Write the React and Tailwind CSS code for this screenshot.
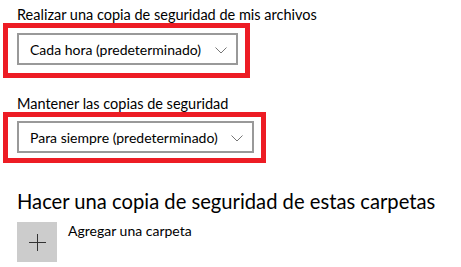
const Chevron = () => (
    <svg width="12" height="7" viewBox="0 0 12 7" className="shrink-0">
        <path d="M0.5 0.5 L6 6 L11.5 0.5" fill="none" stroke="#767676" strokeWidth="1" />
    </svg>
);

const Dropdown = ({ label, value, width, pad }) => {
    return (
        <div className="flex flex-col">
            <p className="pl-[17px] text-[14.5px] leading-[17px] text-black whitespace-nowrap">{label}</p>
            <div className={`ml-[3px] w-fit border-[5px] border-[#ed1c24] ${pad}`}>
                <div
                    className="flex items-center justify-between h-[32px] border-2 border-[#999999] bg-white pl-[11px] pr-[9px] pt-[2px]"
                    style={{ width: width }}
                >
                    <span className="text-[14px] leading-[20px] text-black whitespace-nowrap">{value}</span>
                    <Chevron />
                </div>
            </div>
        </div>
    );
};

export default function App() {
    return (
        <div
            className="w-[461px] h-[267px] bg-white overflow-hidden pt-[6px]"
            style={{ fontFamily: 'Lato, "Noto Sans", sans-serif' }}
        >
            <Dropdown
                label="Realizar una copia de seguridad de mis archivos"
                value="Cada hora (predeterminado)"
                width={221}
                pad="pl-[9px] pt-[5px] pr-[7px] pb-[8px]"
            />

            <div className="mt-[17px]">
                <Dropdown
                    label="Mantener las copias de seguridad"
                    value="Para siempre (predeterminado)"
                    width={237}
                    pad="pl-[9px] pt-[4px] pr-[7px] pb-[5px]"
                />
            </div>

            <h2 className="mt-[26px] pl-[17px] text-[20.2px] leading-[24px] text-black whitespace-nowrap">
                Hacer una copia de seguridad de estas carpetas
            </h2>

            <div className="mt-[9px] pl-[17px] flex items-start gap-[11px]">
                <button className="w-[40px] h-[40px] shrink-0 bg-[#cccccc] flex items-center justify-center">
                    <svg width="17" height="17" viewBox="0 0 17 17">
                        <path d="M8.5 0 V17 M0 8.5 H17" stroke="#333333" strokeWidth="1" />
                    </svg>
                </button>
                <span className="-mt-[1px] text-[14px] leading-[20px] text-black whitespace-nowrap">Agregar una carpeta</span>
            </div>
        </div>
    );
}
